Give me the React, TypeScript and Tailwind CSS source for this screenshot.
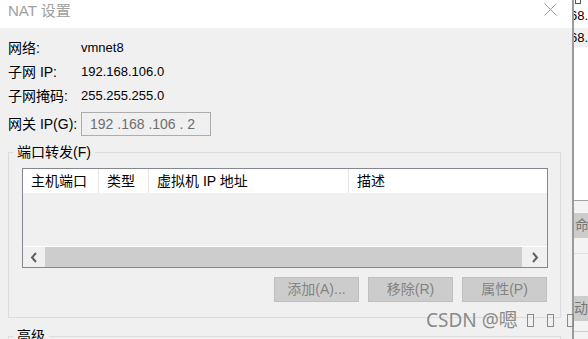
import { ReactNode } from "react";

function InfoRow({ label, children }: { label: string; children: ReactNode }) {
  return (
    <div className="flex h-[24px] items-center">
      <span className="w-[73px] text-[14px]">{label}</span>
      <span className="text-[13px]">{children}</span>
    </div>
  );
}

function Chevron({ dir }: { dir: "left" | "right" }) {
  return (
    <svg width="8" height="11" viewBox="0 0 8 11" className="text-[#606060]">
      <path
        d={dir === "left" ? "M6 1 L2 5.5 L6 10" : "M2 1 L6 5.5 L2 10"}
        fill="none"
        stroke="currentColor"
        strokeWidth="2"
      />
    </svg>
  );
}

const columns = [
  { label: "主机端口", width: "w-[76px]" },
  { label: "类型", width: "w-[50px]" },
  { label: "虚拟机 IP 地址", width: "w-[200px]" },
  { label: "描述", width: "flex-1" },
];

const buttons = ["添加(A)...", "移除(R)", "属性(P)"];

export default function App() {
  return (
    <div className="relative flex h-[339px] w-[588px] overflow-hidden bg-white font-['Liberation_Sans','Noto_Sans_CJK_SC',sans-serif] text-black">
      {/* Dialog */}
      <div className="flex w-[572px] flex-col">
        {/* Title bar */}
        <div className="flex h-[28px] shrink-0 items-start justify-between bg-white pl-2 pr-[15px]">
          <span className="pt-[1px] text-[15px] leading-[20px] text-[#a0a0a0]">NAT 设置</span>
          <svg width="13" height="13" viewBox="0 0 13 13" className="mt-[3px]">
            <path d="M0.5 0.5 L12.5 12.5 M12.5 0.5 L0.5 12.5" stroke="#9a9a9a" strokeWidth="1" fill="none" />
          </svg>
        </div>

        {/* Body */}
        <div className="flex-1 bg-[#f0f0f0] pl-2 pt-2">
          <InfoRow label="网络:">vmnet8</InfoRow>
          <InfoRow label="子网 IP:">192.168.106.0</InfoRow>
          <InfoRow label="子网掩码:">255.255.255.0</InfoRow>
          <div className="mt-[4px] flex h-[24px] items-center">
            <span className="w-[73px] text-[14px]">网关 IP(G):</span>
            <div className="flex h-[24px] w-[130px] items-center border border-[#adadad] pl-[8px] text-[14px] whitespace-pre text-[#6d6d6d]">
              192 .168 .106 . 2
            </div>
          </div>

          {/* Port forwarding */}
          <fieldset className="mt-[7px] w-[553px] border border-[#dcdcdc] pb-[15px] pl-[4px]">
            <legend className="px-[4px] text-[14px] leading-[18px]">端口转发(F)</legend>
            <div className="ml-[9px] mt-[7px] flex h-[100px] w-[526px] flex-col border border-[#828790]">
              <div className="flex h-[24px] shrink-0 bg-white">
                {columns.map((c, i) => (
                  <div
                    key={c.label}
                    className={`${c.width} flex items-center pl-[8px] text-[14px] ${
                      i < columns.length - 1 ? "border-r border-[#e5e5e5]" : ""
                    }`}
                  >
                    {c.label}
                  </div>
                ))}
              </div>
              <div className="flex-1 bg-[#f0f0f0]" />
              <div className="flex h-[21px] shrink-0 border-t border-white bg-[#f0f0f0]">
                <div className="flex w-[22px] items-center justify-center">
                  <Chevron dir="left" />
                </div>
                <div className="flex-1 bg-[#cdcdcd]" />
                <div className="flex w-[25px] items-center justify-center">
                  <Chevron dir="right" />
                </div>
              </div>
            </div>
            <div className="ml-[9px] mt-[9px] flex w-[525px] justify-end gap-[9px]">
              {buttons.map((b) => (
                <div
                  key={b}
                  className="flex h-[25px] w-[85px] items-center justify-center border border-[#bfbfbf] bg-[#cccccc] text-[14px] text-[#838383]"
                >
                  {b}
                </div>
              ))}
            </div>
          </fieldset>

          {/* Advanced */}
          <fieldset className="mt-[9px] h-[40px] w-[553px] border border-[#dcdcdc] pl-[4px]">
            <legend className="px-[4px] text-[14px] leading-[18px]">高级</legend>
          </fieldset>
        </div>
      </div>

      {/* Window behind */}
      <div className="flex flex-1 flex-col overflow-hidden border-l-2 border-[#9b9b9b] bg-white text-[13px]">
        <div className="ml-[1px] h-[4px] w-[6px] border-x border-b border-[#555]" />
        <div className="-ml-[4px] flex h-[24px] items-center whitespace-nowrap">68.</div>
        <div className="flex h-[19px] items-center whitespace-nowrap bg-[#f0f0f0]">
          <span className="-ml-[4px]">68.</span>
        </div>
        <div className="h-[153px]" />
        <div className="flex flex-1 flex-col border-t border-[#a0a0a0] bg-[#f3f3f3]">
          <div className="mt-[12px] flex h-[25px] items-center bg-[#cccccc] pl-[1px] text-[14px] text-[#777]">命</div>
          <div className="mt-[15px] h-[43px] border-t border-[#e0e0e0]" />
          <div className="flex h-[25px] items-center bg-[#cccccc] text-[14px] text-[#777]">动</div>
          <div className="mt-[10px] border-t border-[#d0d0d0]" />
        </div>
      </div>

      {/* Watermark */}
      <div className="absolute left-[426px] top-[308px] flex items-center text-[19px] leading-[24px] text-[#8a8a8a]">
        <span className="font-['Noto_Sans','Noto_Sans_CJK_SC',sans-serif]">CSDN @嗯</span>
        <span className="ml-[9px] h-[13px] w-[7px] border border-[#8a8a8a]" />
        <span className="ml-[13px] h-[13px] w-[7px] border border-[#8a8a8a]" />
        <span className="ml-[13px] h-[13px] w-[7px] border border-[#8a8a8a]" />
      </div>
    </div>
  );
}
